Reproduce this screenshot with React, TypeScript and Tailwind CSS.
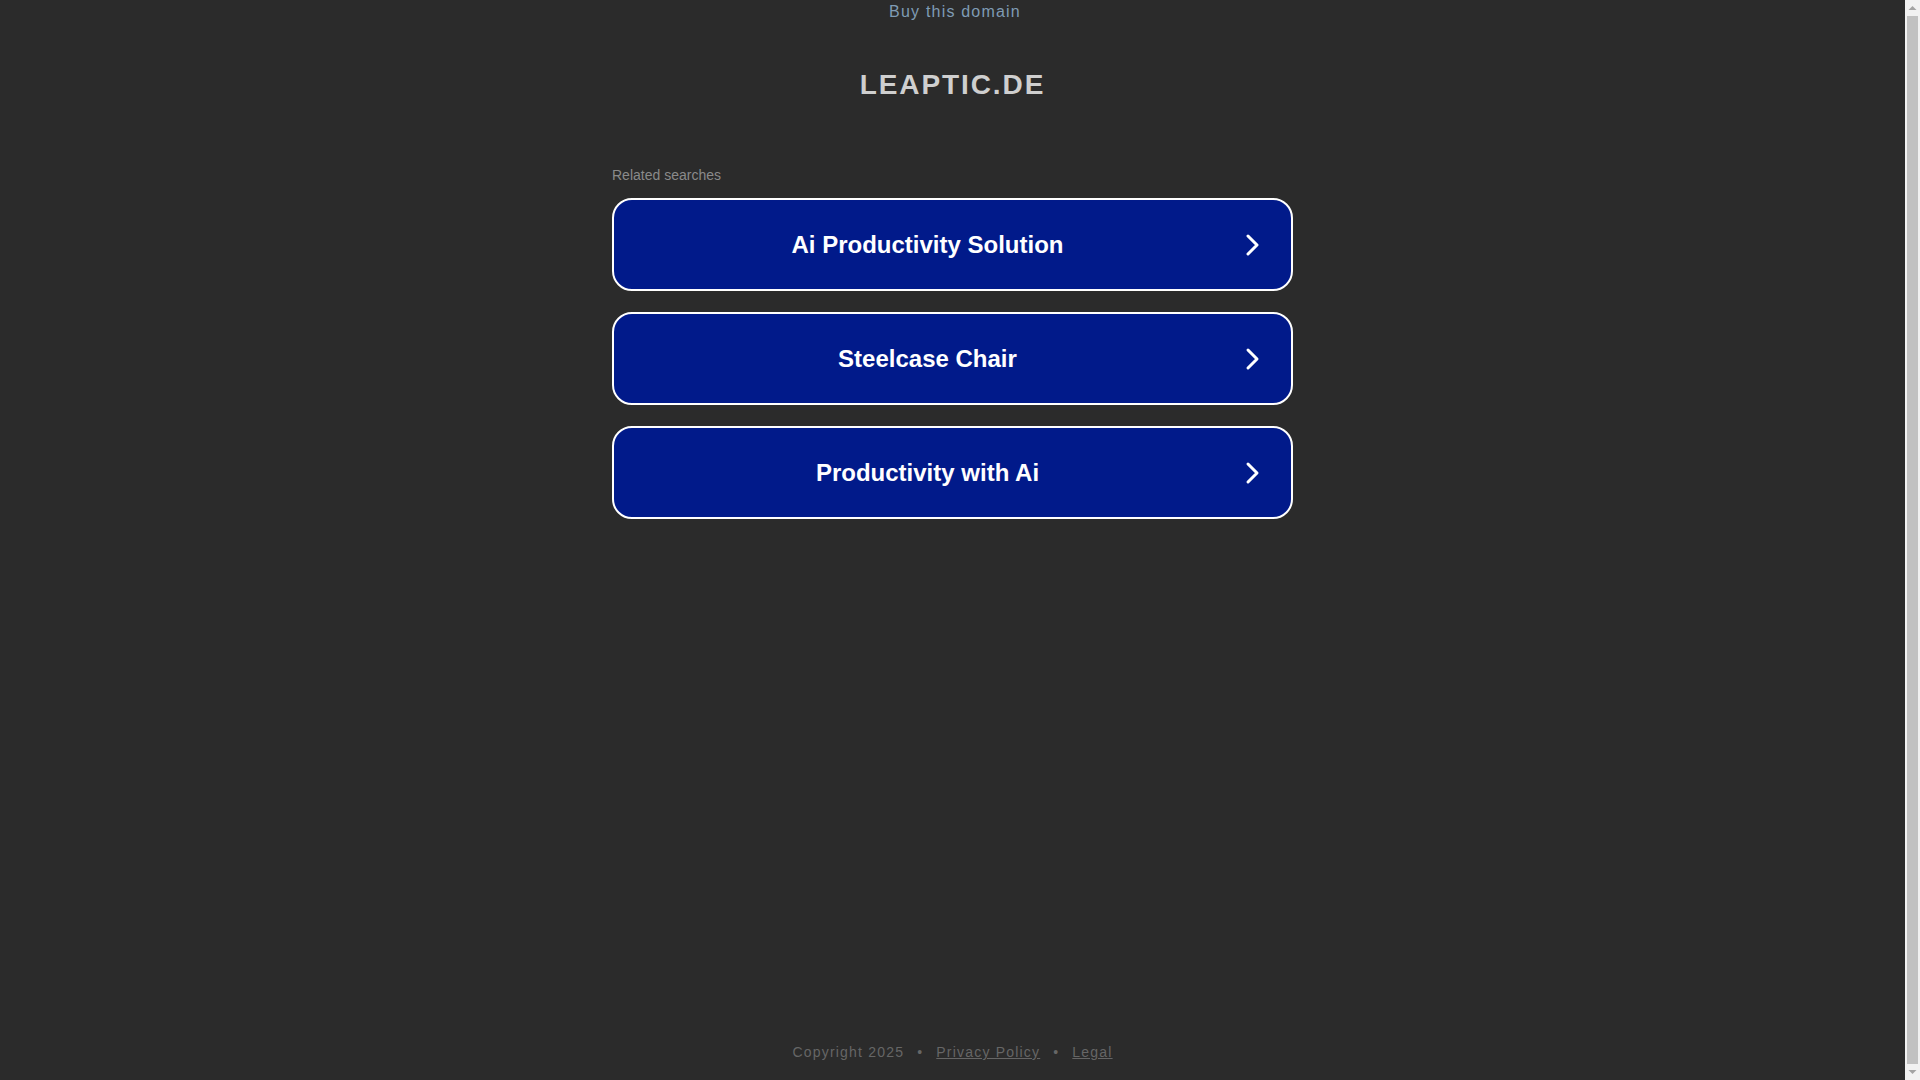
import React from "react";

const items = ["Ai Productivity Solution", "Steelcase Chair", "Productivity with Ai"];

function Chevron() {
  return (
    <svg width="24" height="24" viewBox="0 0 24 24" className="shrink-0">
      <polyline
        points="7,3 16,12 7,21"
        fill="none"
        stroke="#ffffff"
        strokeWidth="3"
        strokeLinecap="round"
        strokeLinejoin="round"
      />
    </svg>
  );
}

function Scrollbar() {
  return (
    <div className="w-[15px] shrink-0 bg-[#f1f1f1] flex flex-col items-center">
      <svg width="15" height="15" viewBox="0 0 15 15" className="shrink-0">
        <polygon points="3.5,10 7.5,6 11.5,10" fill="#a3a3a3" />
      </svg>
      <div className="w-[11px] flex-1 bg-[#c1c1c1] my-[1px]" />
      <svg width="15" height="15" viewBox="0 0 15 15" className="shrink-0">
        <polygon points="3.5,5 7.5,9 11.5,5" fill="#a3a3a3" />
      </svg>
    </div>
  );
}

export default function App() {
  return (
    <div
      className="bg-[#2b2b2b] h-[1080px] flex flex-row overflow-hidden"
      style={{ fontFamily: '"Liberation Sans", Arial, sans-serif' }}
    >
      <div className="flex-1 flex flex-col">
        <div className="pt-[1px] pl-[5px] text-center text-[16px] leading-[22px] tracking-[1.2px] text-[#7f9bb4]">
          Buy this domain
        </div>
        <h1 className="mt-[45px] text-center text-[28px] leading-[34px] font-bold tracking-[1.9px] text-[#cfcfcf]">
          LEAPTIC.DE
        </h1>
        <div className="mx-auto w-[681px] mt-[63px]">
          <div className="text-[14px] leading-[20px] text-[#8a8a8a]">Related searches</div>
          <div className="mt-[13px] flex flex-col gap-[21px]">
            {items.map((t) => (
              <div
                key={t}
                className="h-[93px] flex items-center rounded-[20px] border-2 border-white bg-[#011a8a]"
              >
                <div className="flex-1 text-center text-[24px] font-bold text-white">{t}</div>
                <div className="mr-[26px]">
                  <Chevron />
                </div>
              </div>
            ))}
          </div>
        </div>
        <div className="flex-1" />
        <div className="mb-[18px] text-center text-[14px] leading-[20px] tracking-[1.2px] text-[#666666]">
          <span>Copyright 2025</span>
          <span className="mx-[13px]">•</span>
          <a className="underline" href="#">Privacy Policy</a>
          <span className="mx-[13px]">•</span>
          <a className="underline" href="#">Legal</a>
        </div>
      </div>
      <Scrollbar />
    </div>
  );
}
